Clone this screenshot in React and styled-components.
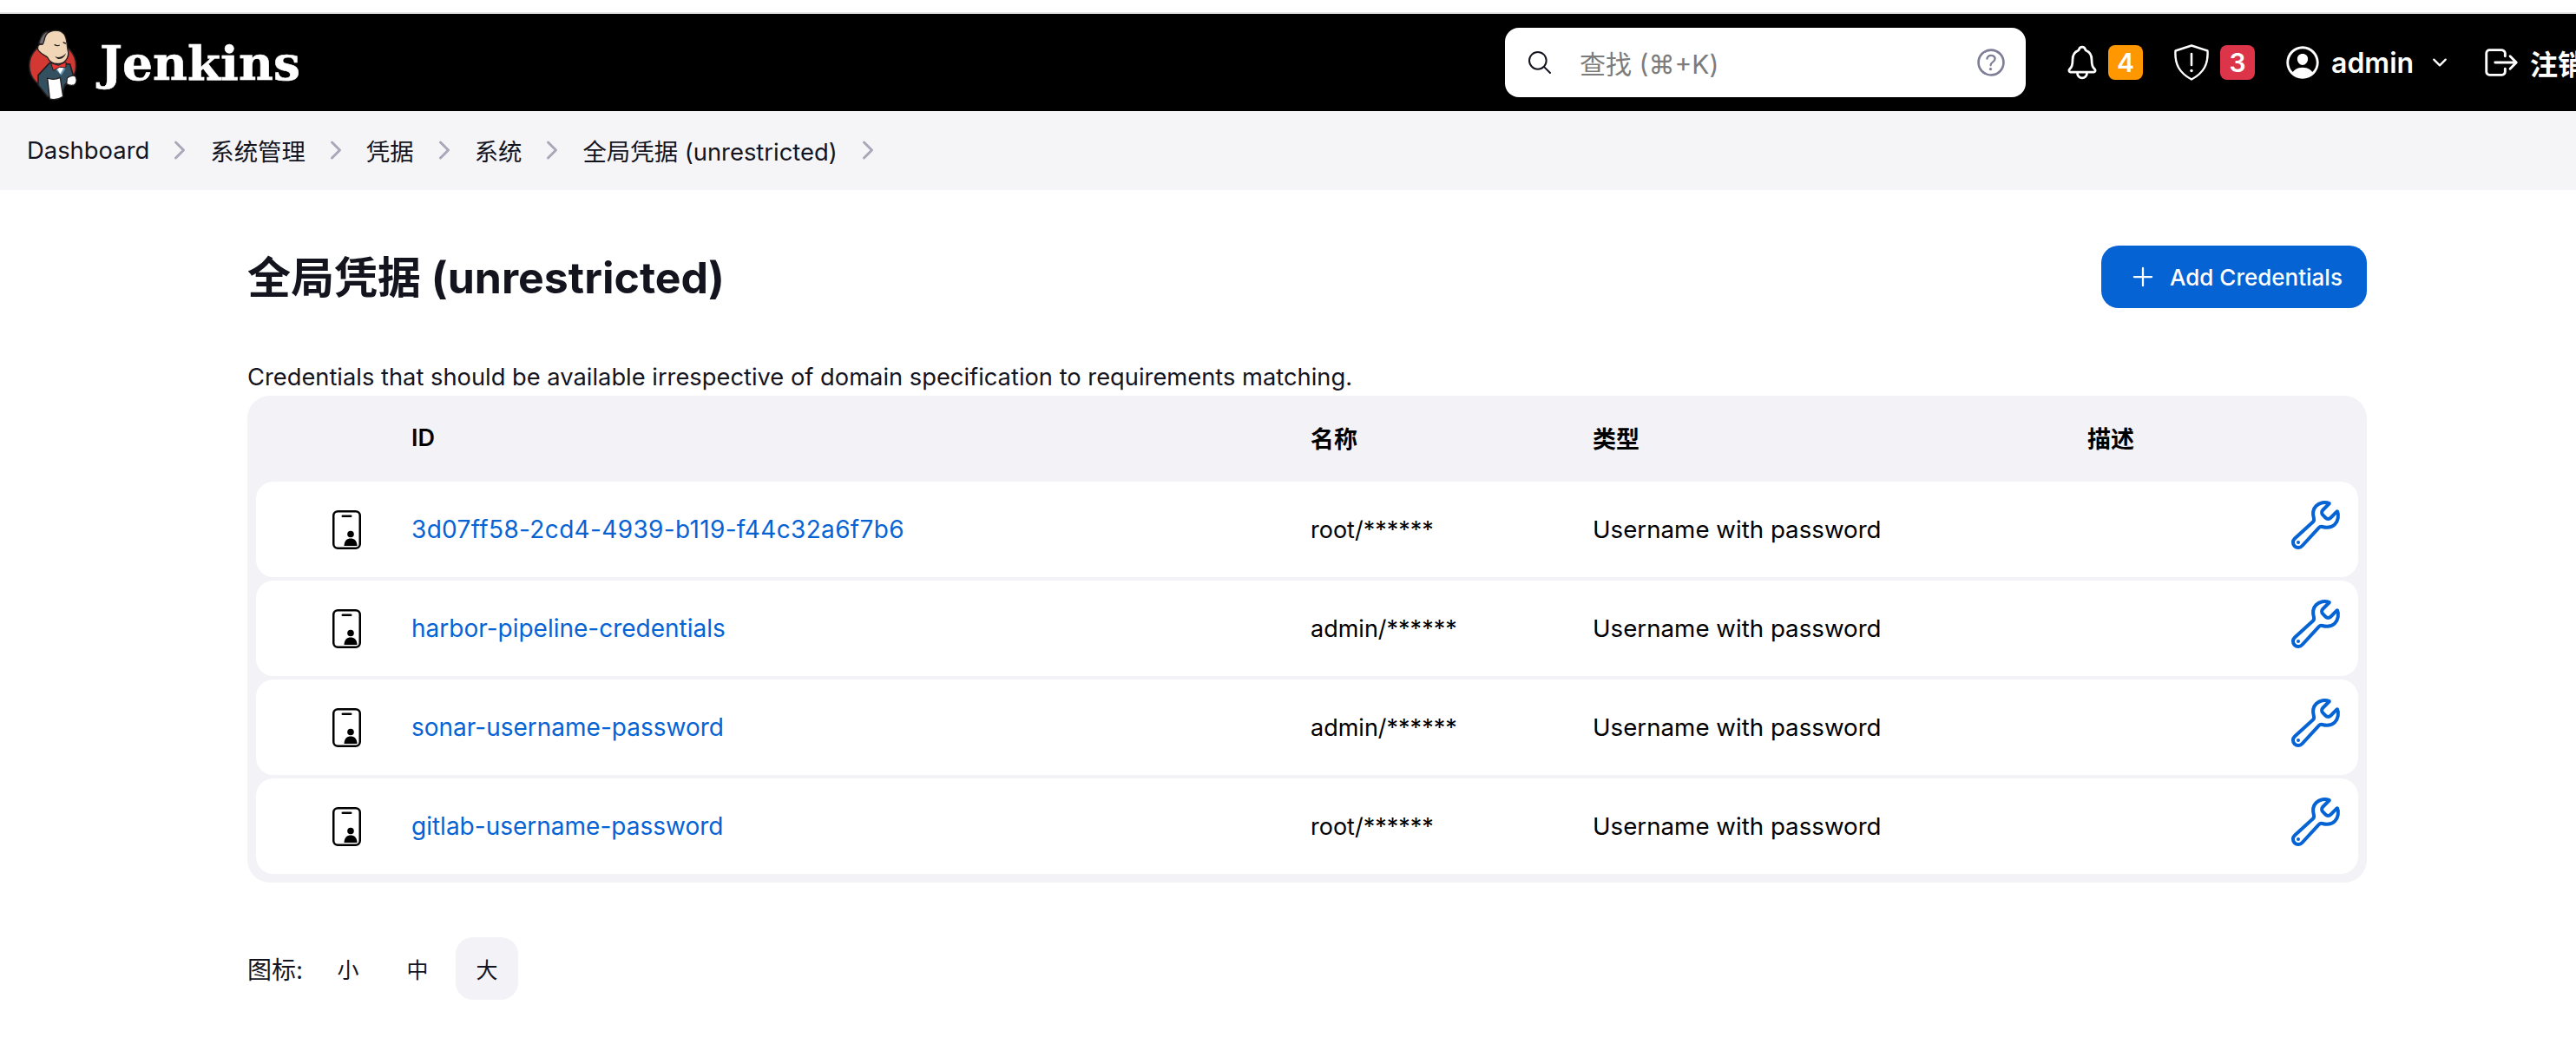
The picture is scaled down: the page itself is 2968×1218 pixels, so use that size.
import React from "react";
import styled, { createGlobalStyle } from "styled-components";
import {
  IoBuildOutline,
  IoNotificationsOutline,
  IoPersonCircleOutline,
  IoLogOutOutline,
  IoSearchOutline,
  IoHelpCircleOutline,
  IoChevronDownOutline,
  IoChevronForwardOutline,
  IoAddOutline,
} from "react-icons/io5";

const SANS = `Inter, "Noto Sans CJK SC", sans-serif`;

const GlobalStyle = createGlobalStyle`
  html, body {
    margin: 0;
    padding: 0;
    background: #fff;
    overflow: hidden;
  }
  body {
    font-family: ${SANS};
    color: #14141f;
  }
`;

const TopStrip = styled.div`
  height: 14px;
  background: #fff;
  border-bottom: 2px solid #e4e4e4;
`;

const Header = styled.header`
  display: flex;
  align-items: center;
  height: 112px;
  width: 2968px;
  background: #000;
  color: #fff;
  overflow: hidden;
`;

const Brand = styled.a`
  display: flex;
  align-items: center;
  margin-left: 33px;
  width: 1701px;
  flex-shrink: 0;
`;

const Wordmark = styled.span`
  margin-left: 25px;
  font-family: "DejaVu Serif", serif;
  font-weight: 700;
  font-size: 55px;
  line-height: 1;
  color: #fff;
  -webkit-text-stroke: 0.6px #fff;
`;

const Search = styled.div`
  display: flex;
  align-items: center;
  flex-shrink: 0;
  width: 600px;
  height: 80px;
  padding: 0 19px 0 24px;
  box-sizing: border-box;
  background: #fff;
  border-radius: 16px;
  color: #14141f;
`;

const Placeholder = styled.span`
  flex: 1;
  margin-left: 30px;
  font-size: 30px;
  color: #7c7c7c;
`;

const Actions = styled.div`
  display: flex;
  align-items: center;
  flex-shrink: 0;
  margin-left: 43px;
`;

const Action = styled.a`
  display: flex;
  align-items: center;
  flex-shrink: 0;
  color: #fff;
  margin-left: ${(p) => p.$gap || 0}px;
`;

const Badge = styled.span`
  display: flex;
  align-items: center;
  justify-content: center;
  width: 40px;
  height: 40px;
  margin-left: ${(p) => p.$gap}px;
  border-radius: 8px;
  background: ${(p) => p.$color};
  color: #fff;
  font-size: 30px;
  font-weight: 600;
`;

const UserName = styled.span`
  margin-left: 10px;
  font-size: 32px;
  font-weight: 600;
`;

const Breadcrumbs = styled.nav`
  display: flex;
  align-items: center;
  height: 91px;
  padding: 0 0 2px 31px;
  box-sizing: border-box;
  background: #f5f5f8;
`;

const Crumb = styled.a`
  font-size: 27.4px;
  color: #14141f;
  white-space: nowrap;
`;

const CrumbArrow = styled.span`
  display: flex;
  width: 70px;
  justify-content: center;
  color: #a8a8b8;
  font-size: 32px;
`;

const Main = styled.main`
  padding: 64px 241px 0 285px;
`;

const TitleRow = styled.div`
  display: flex;
  align-items: center;
  justify-content: space-between;
  height: 72px;
`;

const Title = styled.h1`
  margin: 0 0 6px;
  font-size: 50px;
  font-weight: 700;
  color: #14141f;
`;

const AddButton = styled.button`
  display: flex;
  align-items: center;
  width: 306px;
  height: 72px;
  padding: 0 0 0 30px;
  box-sizing: border-box;
  border: 0;
  border-radius: 20px;
  background: #0663d4;
  color: #fff;
  font-family: ${SANS};
  font-size: 26px;
  font-weight: 550;
`;

const AddLabel = styled.span`
  margin-left: 13px;
`;

const Description = styled.p`
  margin: 62px 0 3px;
  font-size: 27.3px;
  line-height: 36px;
  color: #14141f;
`;

const Table = styled.div`
  padding: 0 10px 10px;
  background: #f2f2f7;
  border-radius: 26px;
`;

const COLUMNS = "179px 1036px 325px 570px 1fr";

const HeadRow = styled.div`
  display: grid;
  grid-template-columns: ${COLUMNS};
  align-items: center;
  height: 99px;
  padding-bottom: 2px;
  box-sizing: border-box;
  font-size: 27px;
  font-weight: 600;
  color: #000;
`;

const Rows = styled.div`
  display: flex;
  flex-direction: column;
  gap: 4px;
`;

const Row = styled.div`
  display: grid;
  grid-template-columns: ${COLUMNS};
  align-items: center;
  height: 110px;
  background: #fff;
  border-radius: 20px;
  font-size: 27.7px;
  color: #000;
`;

const KindCell = styled.div`
  display: flex;
  justify-content: center;
  padding-left: 29px;
`;

const IdLink = styled.a`
  color: #0663d4;
  font-size: 28px;
  letter-spacing: ${(p) => (p.$hex ? "0.34px" : "0")};
`;

const CredentialName = styled.span`
  font-size: 27px;
`;

const ConfigureCell = styled.div`
  display: flex;
  justify-content: flex-end;
  padding-right: 17px;
  color: #0663d4;
  margin-top: -11px;
`;

const IconSizes = styled.div`
  display: flex;
  align-items: center;
  margin-top: 63px;
`;

const SizeLabel = styled.span`
  width: 80px;
  font-size: 28px;
  color: #14141f;
`;

const SizeButton = styled.button`
  width: 72px;
  height: 72px;
  margin-right: 8px;
  padding: 0;
  border: 0;
  border-radius: 20px;
  background: ${(p) => (p.$active ? "#f2f2f7" : "transparent")};
  color: #14141f;
  font-family: ${SANS};
  font-size: 25px;
`;

// mascot, coordinates are 3x the pixels of the 76x96 box
function JenkinsLogo() {
  return (
    <svg width="76" height="96" viewBox="0 0 228 288" style={{ margin: "0 -10px 0 -9px" }}>
      <circle cx="110" cy="155" r="81" fill="#d33833" stroke="#231f20" strokeWidth="5" />
      <path d="M60 188 L100 145 L170 150 L182 192 L152 222 L140 262 L92 262 L60 222 Z" fill="#335061" stroke="#231f20" strokeWidth="5" />
      <path d="M112 160 L158 160 L140 188 Z" fill="#6d9ab8" />
      <path d="M122 160 L150 160 L136 184 Z" fill="#fff" />
      <path d="M62 78 C70 48 84 36 96 36 L86 60 L80 84 Z" fill="#6d6b6d" stroke="#231f20" strokeWidth="4" />
      <path d="M84 56 C92 32 130 26 148 44 C162 60 158 90 164 108 C166 128 152 146 134 148 C116 150 100 144 92 126 C84 120 72 116 62 104 C54 92 60 78 74 82 C78 82 80 70 84 56 Z" fill="#f0d6b7" stroke="#231f20" strokeWidth="4" />
      <path d="M116 82 C122 86 128 88 134 84 M146 74 C150 76 152 78 156 78" fill="none" stroke="#231f20" strokeWidth="4" />
      <path d="M118 122 C130 130 148 124 156 112 C150 132 128 140 118 122 Z" fill="#231f20" />
      <path d="M104 146 L130 154 L156 142 L156 162 L134 160 L112 172 Z" fill="#e53935" stroke="#231f20" strokeWidth="3" />
      <path d="M92 198 C106 204 124 202 136 196 L146 262 C130 272 112 274 100 270 Z" fill="#fff" stroke="#231f20" strokeWidth="4" />
      <path d="M160 198 C170 190 184 186 190 194 C194 204 192 216 184 222 C174 224 164 222 158 218 Z" fill="#fff" stroke="#231f20" strokeWidth="4" />
    </svg>
  );
}

function ShieldAlert() {
  return (
    <svg width="42" height="42" viewBox="0 0 42 42" fill="none" stroke="#fff" strokeWidth="2.4">
      <path d="M21 1.5 L39.5 7.5 C40.5 23 35 33 21 40.5 C7 33 1.5 23 2.5 7.5 Z" strokeLinejoin="round" />
      <path d="M21 11 L21 24" strokeLinecap="round" strokeWidth="2.6" />
      <circle cx="21" cy="30.5" r="1.7" fill="#fff" stroke="none" />
    </svg>
  );
}

function CredentialIcon() {
  return (
    <svg width="33" height="45" viewBox="0 0 33 45">
      <rect x="1.25" y="1.25" width="30.5" height="42.5" rx="5" fill="none" stroke="#000" strokeWidth="2.5" />
      <rect x="10.5" y="5.5" width="12" height="2.6" rx="1.3" fill="#000" />
      <circle cx="21" cy="27.5" r="3.8" fill="#000" />
      <path d="M13.5 41 C13.5 35 17 32.5 21 32.5 C25 32.5 28.5 35 28.5 41 Z" fill="#000" />
    </svg>
  );
}

const credentials = [
  { id: "3d07ff58-2cd4-4939-b119-f44c32a6f7b6", name: "root/******", hex: true },
  { id: "harbor-pipeline-credentials", name: "admin/******" },
  { id: "sonar-username-password", name: "admin/******" },
  { id: "gitlab-username-password", name: "root/******" },
];

const crumbs = ["Dashboard", "系统管理", "凭据", "系统", "全局凭据 (unrestricted)"];

export default function App() {
  return (
    <>
      <GlobalStyle />
      <TopStrip />
      <Header>
        <Brand>
          <JenkinsLogo />
          <Wordmark>Jenkins</Wordmark>
        </Brand>
        <Search>
          <IoSearchOutline size={32} />
          <Placeholder>查找 (⌘+K)</Placeholder>
          <IoHelpCircleOutline size={42} color="#7d7d96" />
        </Search>
        <Actions>
          <Action>
            <IoNotificationsOutline size={44} />
            <Badge $color="#ff9800" $gap={8}>4</Badge>
          </Action>
          <Action $gap={35}>
            <ShieldAlert />
            <Badge $color="#dc3549" $gap={12}>3</Badge>
          </Action>
          <Action $gap={32}>
            <IoPersonCircleOutline size={46} />
            <UserName>admin</UserName>
            <IoChevronDownOutline size={24} style={{ marginLeft: 18 }} />
          </Action>
          <Action $gap={36}>
            <IoLogOutOutline size={46} />
            <UserName>注销</UserName>
          </Action>
        </Actions>
      </Header>
      <Breadcrumbs>
        {crumbs.map((crumb) => (
          <React.Fragment key={crumb}>
            <Crumb>{crumb}</Crumb>
            <CrumbArrow>
              <IoChevronForwardOutline />
            </CrumbArrow>
          </React.Fragment>
        ))}
      </Breadcrumbs>
      <Main>
        <TitleRow>
          <Title>全局凭据 (unrestricted)</Title>
          <AddButton>
            <IoAddOutline size={36} />
            <AddLabel>Add Credentials</AddLabel>
          </AddButton>
        </TitleRow>
        <Description>
          Credentials that should be available irrespective of domain specification to requirements matching.
        </Description>
        <Table>
          <HeadRow>
            <span />
            <span>ID</span>
            <span>名称</span>
            <span>类型</span>
            <span>描述</span>
          </HeadRow>
          <Rows>
            {credentials.map((credential) => (
              <Row key={credential.id}>
                <KindCell>
                  <CredentialIcon />
                </KindCell>
                <IdLink $hex={credential.hex}>{credential.id}</IdLink>
                <CredentialName>{credential.name}</CredentialName>
                <span>Username with password</span>
                <ConfigureCell>
                  <IoBuildOutline size={64} />
                </ConfigureCell>
              </Row>
            ))}
          </Rows>
        </Table>
        <IconSizes>
          <SizeLabel>图标:</SizeLabel>
          <SizeButton>小</SizeButton>
          <SizeButton>中</SizeButton>
          <SizeButton $active>大</SizeButton>
        </IconSizes>
      </Main>
    </>
  );
}
